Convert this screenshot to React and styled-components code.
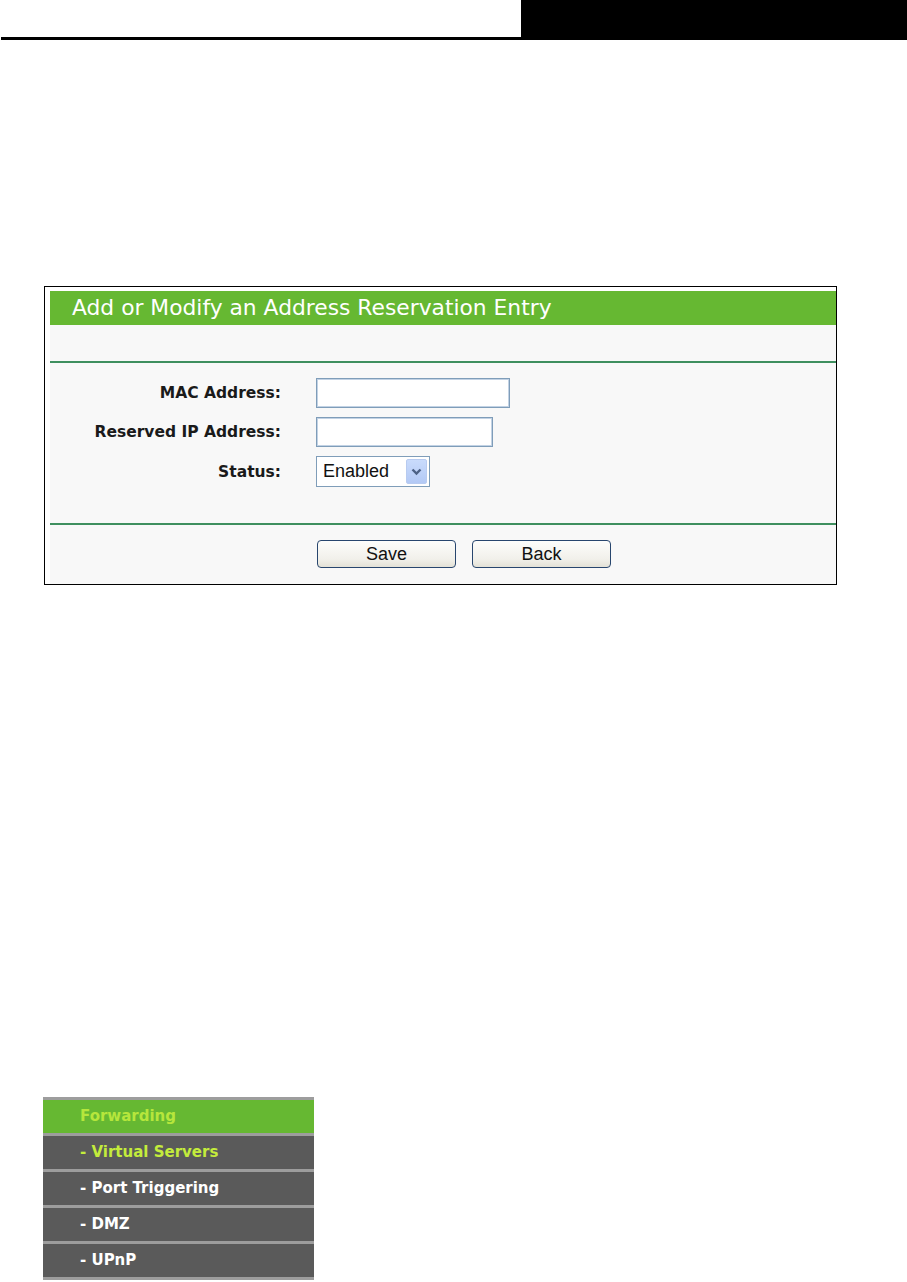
import React from 'react';
import styled, { createGlobalStyle } from 'styled-components';

const GlobalStyle = createGlobalStyle`
  html, body {
    margin: 0;
    padding: 0;
    background: #fff;
  }
  body {
    font-family: "Liberation Sans", Arial, sans-serif;
  }
`;

const Page = styled.div`
  width: 907px;
  height: 1282px;
  overflow: hidden;
  display: flex;
  flex-direction: column;
`;

const Header = styled.div`
  display: flex;
  height: 40px;
  padding-left: 1px;

  .rule {
    flex: 1;
    border-bottom: 3px solid #000;
  }
  .tab {
    width: 386px;
    background: #000;
  }
`;

const Panel = styled.div`
  margin: 246px 0 0 44px;
  width: 786px;
  border: 1px solid #000;
  padding: 4px 0 0 5px;
  background: #fff;
`;

const Inner = styled.div`
  background: #f8f8f8;
`;

const TitleBar = styled.div`
  height: 34px;
  background: #66b832;
  color: #fff;
  font-family: "DejaVu Sans", Verdana, sans-serif;
  font-size: 21.8px;
  line-height: 34px;
  padding-left: 22px;
  white-space: nowrap;
`;

const Section = styled.div`
  padding: ${p => p.pad};
  border-bottom: ${p => (p.line ? '2px solid #3f8f5f' : 'none')};
`;

const FormGrid = styled.div`
  display: grid;
  grid-template-columns: 231px 1fr;
  column-gap: 35px;
  row-gap: 9px;
  align-items: center;
`;

const Label = styled.div`
  text-align: right;
  font-family: "DejaVu Sans", Verdana, sans-serif;
  font-weight: bold;
  font-size: 15.5px;
  color: #1a1a1a;
  white-space: nowrap;
`;

const TextBox = styled.input`
  box-sizing: border-box;
  width: ${p => p.w}px;
  height: 30px;
  border: 1px solid #7f9db9;
  outline: 1px solid #c2d2e4;
  outline-offset: -2px;
  background: #fff;
  margin: 0;
`;

const Select = styled.div`
  box-sizing: border-box;
  width: 114px;
  height: 31px;
  border: 1px solid #7f9db9;
  background: #fff;
  display: flex;
  align-items: center;
  justify-content: space-between;
  padding: 0 2px 0 6px;
  font-size: 18px;
  color: #111;

  .arrow {
    width: 21px;
    height: 25px;
    border-radius: 2px;
    background: linear-gradient(#c9dbfc, #b3c9f5);
    border: 1px solid #b8cbf0;
    box-sizing: border-box;
    display: flex;
    align-items: center;
    justify-content: center;
  }
`;

const ButtonRow = styled.div`
  display: flex;
  gap: 16px;
  padding-left: 267px;
`;

const Button = styled.div`
  box-sizing: border-box;
  width: 139px;
  height: 28px;
  border: 1px solid #28466e;
  border-radius: 4px;
  background: linear-gradient(#fdfdfb, #f1f0ea 70%, #e3e1d6);
  display: flex;
  align-items: center;
  justify-content: center;
  font-size: 18px;
  color: #111;
`;

const Menu = styled.div`
  margin: 512px 0 0 43px;
  width: 271px;
  border-top: 3px solid #9d9d9d;
`;

const MenuItem = styled.div`
  height: 33px;
  border-bottom: 3px solid #9d9d9d;
  background: ${p => (p.head ? '#66b832' : '#5a5a5a')};
  color: ${p => (p.active ? '#c4ec3c' : p.head ? '#b6e63c' : '#fff')};
  font-family: "DejaVu Sans", Verdana, sans-serif;
  font-weight: bold;
  font-size: 15px;
  line-height: 33px;
  padding-left: 37px;
`;

function Chevron() {
  return (
    <svg width="11" height="8" viewBox="0 0 11 8">
      <path d="M1.5 1.5 L5.5 5.5 L9.5 1.5" fill="none" stroke="#4d6185" strokeWidth="2.4" />
    </svg>
  );
}

export default function App() {
  return (
    <Page>
      <GlobalStyle />
      <Header>
        <div className="rule" />
        <div className="tab" />
      </Header>

      <Panel>
        <Inner>
          <TitleBar>Add or Modify an Address Reservation Entry</TitleBar>
          <Section pad="0" line style={{ height: 36 }} />
          <Section pad="15px 0 36px" line>
            <FormGrid>
              <Label>MAC Address:</Label>
              <TextBox w={194} />
              <Label>Reserved IP Address:</Label>
              <TextBox w={177} />
              <Label>Status:</Label>
              <Select>
                <span>Enabled</span>
                <span className="arrow">
                  <Chevron />
                </span>
              </Select>
            </FormGrid>
          </Section>
          <Section pad="15px 0 16px">
            <ButtonRow>
              <Button>Save</Button>
              <Button>Back</Button>
            </ButtonRow>
          </Section>
        </Inner>
      </Panel>

      <Menu>
        <MenuItem head>Forwarding</MenuItem>
        <MenuItem active>- Virtual Servers</MenuItem>
        <MenuItem>- Port Triggering</MenuItem>
        <MenuItem>- DMZ</MenuItem>
        <MenuItem>- UPnP</MenuItem>
      </Menu>
    </Page>
  );
}
